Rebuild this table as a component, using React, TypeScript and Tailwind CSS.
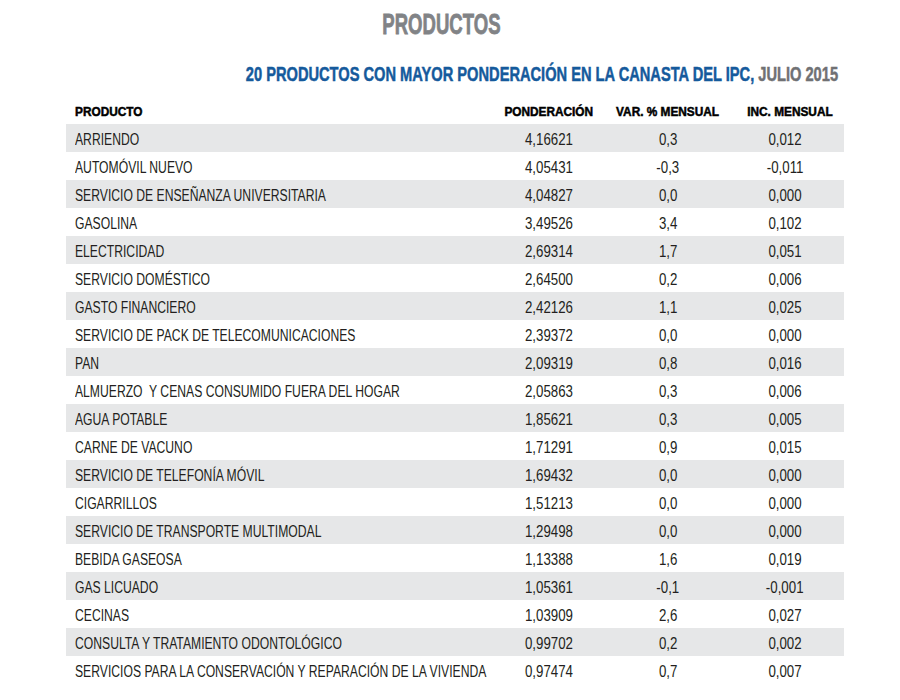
const rows: [string, string, string, string][] = [
  ['ARRIENDO', '4,16621', '0,3', '0,012'],
  ['AUTOMÓVIL NUEVO', '4,05431', '-0,3', '-0,011'],
  ['SERVICIO DE ENSEÑANZA UNIVERSITARIA', '4,04827', '0,0', '0,000'],
  ['GASOLINA', '3,49526', '3,4', '0,102'],
  ['ELECTRICIDAD', '2,69314', '1,7', '0,051'],
  ['SERVICIO DOMÉSTICO', '2,64500', '0,2', '0,006'],
  ['GASTO FINANCIERO', '2,42126', '1,1', '0,025'],
  ['SERVICIO DE PACK DE TELECOMUNICACIONES', '2,39372', '0,0', '0,000'],
  ['PAN', '2,09319', '0,8', '0,016'],
  ['ALMUERZO  Y CENAS CONSUMIDO FUERA DEL HOGAR', '2,05863', '0,3', '0,006'],
  ['AGUA POTABLE', '1,85621', '0,3', '0,005'],
  ['CARNE DE VACUNO', '1,71291', '0,9', '0,015'],
  ['SERVICIO DE TELEFONÍA MÓVIL', '1,69432', '0,0', '0,000'],
  ['CIGARRILLOS', '1,51213', '0,0', '0,000'],
  ['SERVICIO DE TRANSPORTE MULTIMODAL', '1,29498', '0,0', '0,000'],
  ['BEBIDA GASEOSA', '1,13388', '1,6', '0,019'],
  ['GAS LICUADO', '1,05361', '-0,1', '-0,001'],
  ['CECINAS', '1,03909', '2,6', '0,027'],
  ['CONSULTA Y TRATAMIENTO ODONTOLÓGICO', '0,99702', '0,2', '0,002'],
  ['SERVICIOS PARA LA CONSERVACIÓN Y REPARACIÓN DE LA VIVIENDA', '0,97474', '0,7', '0,007'],
];

// condensed look: no narrow face installed, so squeeze Liberation Sans
const cols = 'grid grid-cols-[428px_110px_128px_112px]';
const heavy = '[-webkit-text-stroke:0.5px_currentColor]';

export default function App() {
  return (
    <div className="w-[900px] h-[700px] bg-white overflow-hidden font-['Liberation_Sans',Arial,sans-serif] text-[#231f20]">
      <div className="h-[48px] leading-[48px] text-center pr-[18px]">
        <span className={`inline-block scale-x-[0.64] text-[29px] font-bold text-[#818386] [-webkit-text-stroke:0.8px_currentColor]`}>
          PRODUCTOS
        </span>
      </div>

      <div className="h-[52px] leading-[52px] flex justify-end pr-[62px]">
        <span className={`inline-block origin-right scale-x-[0.732] whitespace-nowrap text-[20px] font-bold text-[#155a9c] ${heavy}`}>
          20 PRODUCTOS CON MAYOR PONDERACIÓN EN LA CANASTA DEL IPC,{' '}
          <span className="text-[#707174]">JULIO 2015</span>
        </span>
      </div>

      <div className="ml-[66px] w-[778px] text-[16px]">
        {/* header */}
        <div className={`${cols} h-[24px] items-center text-[13px] font-bold text-black ${heavy}`}>
          <div className="pl-[9px]">
            <span className="inline-block origin-left scale-x-[0.91]">PRODUCTO</span>
          </div>
          <div className="text-center">
            <span className="inline-block scale-x-[0.91]">PONDERACIÓN</span>
          </div>
          <div className="text-center">
            <span className="inline-block scale-x-[0.91] whitespace-nowrap">VAR. % MENSUAL</span>
          </div>
          <div className="text-center pl-[4px]">
            <span className="inline-block scale-x-[0.91] whitespace-nowrap">INC. MENSUAL</span>
          </div>
        </div>

        {rows.map(([name, pond, vr, inc], i) => (
          <div key={name} className={`${cols} h-[28px] pt-[4px] items-center ${i % 2 === 0 ? 'bg-[#e6e7e8]' : ''}`}>
            <div className="pl-[9px] whitespace-pre">
              <span className="inline-block origin-left scale-x-[0.76]">{name}</span>
            </div>
            <div className="text-center">
              <span className="inline-block scale-x-[0.83]">{pond}</span>
            </div>
            <div className="text-center">
              <span className="inline-block scale-x-[0.83]">{vr}</span>
            </div>
            <div className="text-center pr-[6px]">
              <span className="inline-block scale-x-[0.83]">{inc}</span>
            </div>
          </div>
        ))}
      </div>
    </div>
  );
}
